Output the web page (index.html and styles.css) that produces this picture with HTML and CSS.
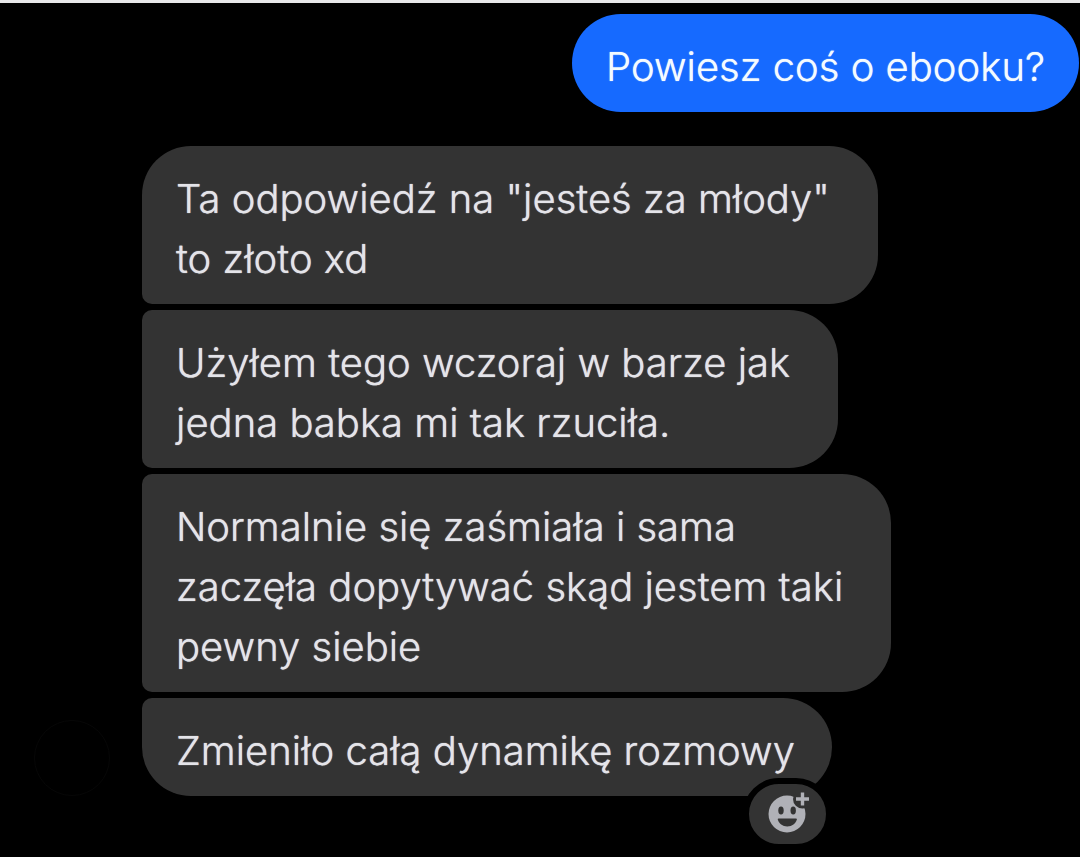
FILE: index.html
```html
<!DOCTYPE html>
<html lang="pl">
<head>
  <meta charset="utf-8">
  <meta name="viewport" content="width=device-width, initial-scale=1">
  <title>Chat</title>
  <link rel="stylesheet" href="styles.css">
</head>
<body>
  <main class="chat">
    <div class="message sent">Powiesz coś o ebooku?</div>

    <div class="received">
      <div class="avatar"></div>
      <div class="group">
        <div class="message long">Ta odpowiedź na "jesteś za młody"<br>to złoto xd</div>
        <div class="message long">Użyłem tego wczoraj w barze jak<br>jedna babka mi tak rzuciła.</div>
        <div class="message long">Normalnie się zaśmiała i sama<br>zaczęła dopytywać skąd jestem taki<br>pewny siebie</div>
        <div class="message">Zmieniło całą dynamikę rozmowy
          <button class="react" type="button" aria-label="Dodaj reakcję">
            <svg width="44" height="44" viewBox="-2 3 44 44" aria-hidden="true">
              <circle cx="20" cy="25" r="18.5" fill="#b0b1b7"/>
              <circle cx="35.5" cy="10" r="9.5" fill="#333"/>
              <path d="M35.5 3.5v13M29 10h13" stroke="#b0b1b7" stroke-width="3.4" fill="none"/>
              <ellipse cx="14" cy="21.5" rx="2.7" ry="4" fill="#333"/>
              <ellipse cx="26.2" cy="21.5" rx="2.7" ry="4" fill="#333"/>
              <path d="M11.5 29.5h17.500q1 0 .8 1C28.800 34.500 25 37.500 20.300 37.500S11.800 34.500 10.800 30.500q-.2-1 .7-1z" fill="#333"/>
            </svg>
          </button>
        </div>
      </div>
    </div>
  </main>
</body>
</html>
```
FILE: styles.css
```css
* {
  box-sizing: border-box;
}

body {
  margin: 0;
  min-height: 100vh;
  background: #000;
  color: #e4e4e9;
  font-family: Inter, "Liberation Sans", sans-serif;
  font-size: 40px;
  font-weight: 300;
  line-height: 60px;
  text-shadow: 0 0 1px currentColor;
}

.chat {
  display: flex;
  flex-direction: column;
  gap: 34px;
  padding: 11px 1px 0 0;
  border-top: 3px solid #e8e8ea;
}

.message {
  position: relative;
  padding: 23px 34px 15px;
  border-radius: 10px 49px 49px 10px;
  background: #333;
}

.long {
  padding-right: 48px;
}

.sent {
  align-self: flex-end;
  border-radius: 49px;
  background: #166aff;
  color: #f4fbff;
}

.received {
  display: flex;
  align-items: flex-end;
  gap: 32px;
  padding-left: 34px;
}

.avatar {
  width: 76px;
  height: 76px;
  border: 1px solid #070707;
  border-radius: 50%;
}

.group {
  display: flex;
  flex-direction: column;
  align-items: flex-start;
  gap: 6px;
}

.group .message:first-child {
  border-top-left-radius: 49px;
}

.group .message:last-child {
  padding-right: 37px;
  border-bottom-left-radius: 49px;
}

/* sits over the bottom edge of the last bubble */
.react {
  position: absolute;
  right: 0;
  bottom: -54px;
  display: flex;
  align-items: center;
  justify-content: center;
  width: 89px;
  height: 72px;
  padding: 0;
  border: 6px solid #000;
  border-radius: 36px;
  background: #333;
  cursor: pointer;
}
```
